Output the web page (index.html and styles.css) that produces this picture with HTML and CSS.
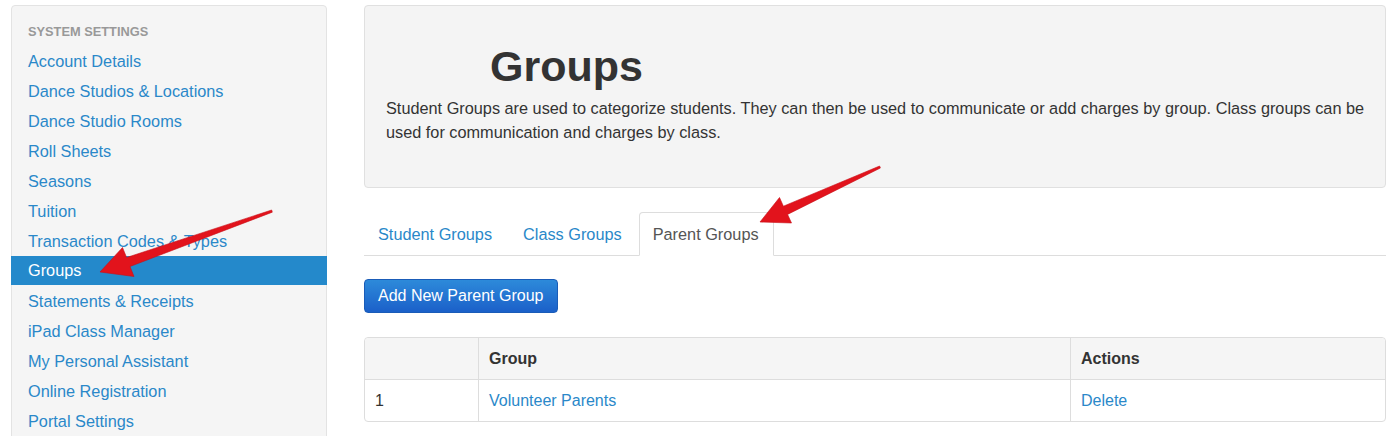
FILE: index.html
```html
<!DOCTYPE html>
<html lang="en">
<head>
    <meta charset="UTF-8">
    <meta name="viewport" content="width=device-width, initial-scale=1.0">
    <title>Groups</title>
    <link rel="stylesheet" href="styles.css">
</head>
<body>
    <div class="page">
        <div class="sidebar">
            <div class="sidebar-title">SYSTEM SETTINGS</div>
            <a class="side-link" href="#">Account Details</a>
            <a class="side-link" href="#">Dance Studios &amp; Locations</a>
            <a class="side-link" href="#">Dance Studio Rooms</a>
            <a class="side-link" href="#">Roll Sheets</a>
            <a class="side-link" href="#">Seasons</a>
            <a class="side-link" href="#">Tuition</a>
            <a class="side-link" href="#">Transaction Codes &amp; Types</a>
            <a class="side-link active" href="#">Groups</a>
            <a class="side-link" href="#">Statements &amp; Receipts</a>
            <a class="side-link" href="#">iPad Class Manager</a>
            <a class="side-link" href="#">My Personal Assistant</a>
            <a class="side-link" href="#">Online Registration</a>
            <a class="side-link" href="#">Portal Settings</a>
        </div>

        <div class="main">
            <div class="intro">
                <h1>Groups</h1>
                <p>Student Groups are used to categorize students. They can then be used to communicate or add charges by group. Class groups can be used for communication and charges by class.</p>
            </div>

            <ul class="tabs">
                <li><a href="#">Student Groups</a></li>
                <li><a href="#">Class Groups</a></li>
                <li class="current"><a href="#">Parent Groups</a></li>
            </ul>

            <button class="btn-add" type="button">Add New Parent Group</button>

            <table class="groups">
                <thead>
                    <tr>
                        <th class="col-num"></th>
                        <th class="col-name">Group</th>
                        <th>Actions</th>
                    </tr>
                </thead>
                <tbody>
                    <tr>
                        <td>1</td>
                        <td><a href="#">Volunteer Parents</a></td>
                        <td><a href="#">Delete</a></td>
                    </tr>
                </tbody>
            </table>
        </div>
    </div>

    <!-- annotation arrows drawn over the screenshot -->
    <svg class="arrows" width="1392" height="436" viewBox="0 0 1392 436">
        <polygon points="100,272 122.5,247.5 126.6,257.5 271.7,210 272.3,212.2 130,266.5 134,276.5"/>
        <polygon points="760,222 779.5,197.5 783.4,206.2 879.6,166 880.4,168 787.6,214.4 791.5,223"/>
    </svg>
</body>
</html>
```

FILE: styles.css
```css
body {
    margin: 0;
    font-family: "Liberation Sans", Arial, sans-serif;
    font-size: 16px;
    color: #333;
    background: #fff;
    overflow: hidden;
}
a {
    color: #2a88c9;
    text-decoration: none;
}
.page {
    display: flex;
    align-items: flex-start;
    gap: 37px;
    padding: 5px 6px 0 11px;
}

/* sidebar */
.sidebar {
    width: 316px;
    flex-shrink: 0;
    box-sizing: border-box;
    background: #f5f5f5;
    border: 1px solid #e3e3e3;
    border-radius: 4px;
    padding: 16px 0 40px;
    display: flex;
    flex-direction: column;
    font-size: 16.3px;
}
.sidebar-title {
    font-size: 12.8px;
    font-weight: bold;
    color: #999;
    line-height: 20px;
    padding-left: 16px;
    margin-bottom: 4px;
}
.side-link {
    display: block;
    line-height: 30px;
    padding-left: 16px;
}
.side-link.active {
    background: #2489cb;
    color: #fff;
    margin: 0 -1px 1px;
    padding-left: 17px;
    line-height: 29px;
}

/* main column */
.main {
    flex: 1;
    min-width: 0;
}
.intro {
    background: #f4f4f4;
    border: 1px solid #e0e0e0;
    border-radius: 4px;
    padding: 37px 18px 43px 21px;
}
.intro h1 {
    margin: 0 0 7px 104px;
    font-size: 43px;
    line-height: 46px;
    font-weight: bold;
    color: #333;
}
.intro p {
    margin: 0;
    line-height: 24px;
    font-size: 16.3px;
}

.tabs {
    list-style: none;
    margin: 24px 0 0;
    padding: 0;
    display: flex;
    border-bottom: 1px solid #ddd;
    font-size: 16.3px;
}
.tabs li {
    margin-right: 2px;
    margin-bottom: -1px;
}
.tabs a {
    display: block;
    padding: 11px 14px 10px 13px;
    line-height: 21px;
    border: 1px solid transparent;
    border-radius: 4px 4px 0 0;
}
.tabs .current a {
    color: #555;
    background: #fff;
    border-color: #ddd #ddd transparent;
}

.btn-add {
    display: block;
    margin-top: 23px;
    height: 34px;
    padding: 0 14px 0 13px;
    font-family: inherit;
    font-size: 16px;
    color: #fff;
    background: linear-gradient(#2d8ada, #1b60c9);
    border: 1px solid #1a5cb8;
    border-radius: 4px;
}

.groups {
    width: 100%;
    margin-top: 24px;
    border-collapse: separate;
    border-spacing: 0;
    border: 1px solid #ddd;
    border-radius: 4px;
}
.groups th,
.groups td {
    height: 41px;
    padding: 0 10px;
    text-align: left;
    border-left: 1px solid #ddd;
}
.groups th:first-child,
.groups td:first-child {
    border-left: none;
}
.groups th {
    background: #f5f5f5;
    font-weight: bold;
    border-bottom: 1px solid #ddd;
}
.groups thead th:first-child {
    border-top-left-radius: 4px;
}
.groups thead th:last-child {
    border-top-right-radius: 4px;
}
.col-num {
    width: 93px;
}
.col-name {
    width: 571px;
}

.arrows {
    position: absolute;
    top: 0;
    left: 0;
    pointer-events: none;
}
.arrows polygon {
    fill: #e2131c;
    stroke: #c80f17;
    stroke-width: 0.6;
    stroke-linejoin: round;
}
```
